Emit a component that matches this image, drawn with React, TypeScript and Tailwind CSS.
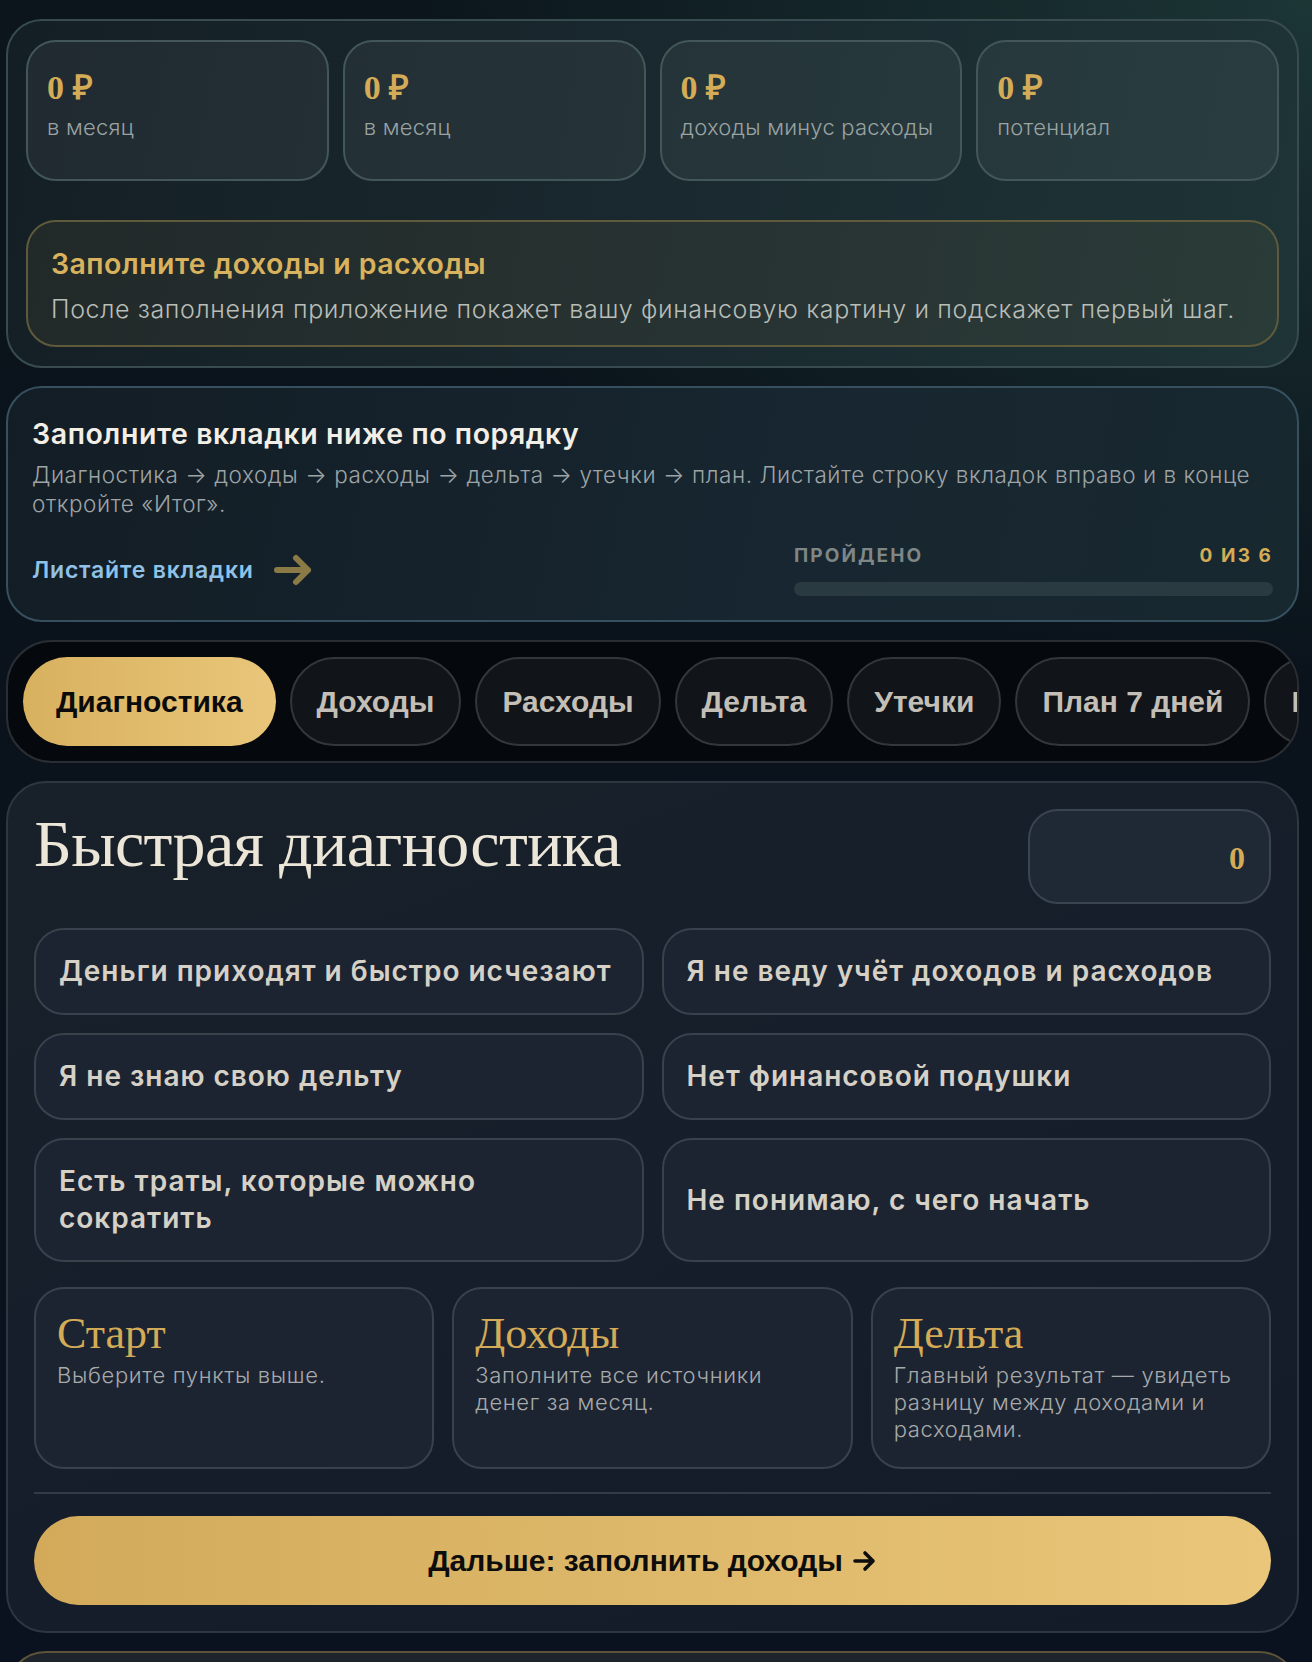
import React from "react";

const sans = "font-['Inter','Noto_Sans',sans-serif]";
const arial = "font-['Liberation_Sans','Arial',sans-serif]";
const serif = "font-['Liberation_Serif','Times_New_Roman',serif]";

const stats = [
  { value: "0 ₽", label: "в месяц" },
  { value: "0 ₽", label: "в месяц" },
  { value: "0 ₽", label: "доходы минус расходы" },
  { value: "0 ₽", label: "потенциал" },
];

const tabs = ["Диагностика", "Доходы", "Расходы", "Дельта", "Утечки", "План 7 дней", "Итог"];

const problems = [
  "Деньги приходят и быстро исчезают",
  "Я не веду учёт доходов и расходов",
  "Я не знаю свою дельту",
  "Нет финансовой подушки",
  "Есть траты, которые можно сократить",
  "Не понимаю, с чего начать",
];

const steps = [
  { title: "Старт", text: "Выберите пункты выше." },
  { title: "Доходы", text: "Заполните все источники денег за месяц." },
  { title: "Дельта", text: "Главный результат — увидеть разницу между доходами и расходами." },
];

const ArrowRight = () => (
  <svg width="42" height="34" viewBox="0 0 42 34" fill="none">
    <path
      d="M4 17h31M23 5l12 12-12 12"
      stroke="#8a7a46"
      strokeWidth="6"
      strokeLinecap="round"
      strokeLinejoin="round"
    />
  </svg>
);

const SmallArrow = () => (
  <svg width="24" height="22" viewBox="0 0 24 22" fill="none" className="inline-block">
    <path
      d="M2 11h18M12 3l8 8-8 8"
      stroke="#0d0d0d"
      strokeWidth="3.6"
      strokeLinecap="round"
      strokeLinejoin="round"
    />
  </svg>
);

export default function App() {
  return (
    <div
      className={`min-h-screen ${sans} bg-[radial-gradient(ellipse_70%_35%_at_100%_0%,#1c3535_0%,transparent_100%),linear-gradient(180deg,#0b151b_0%,#0a121c_50%,#0a1222_100%)]`}
    >
      <div className="flex flex-col gap-[18px] pt-[19px] pl-[6px] pr-[13px] pb-[40px]">
        {/* summary */}
        <section className="rounded-[36px] border-2 border-[#384b4f] bg-[linear-gradient(100deg,#141f25_0%,#1a2a30_55%,#1e3436_100%)] px-[18px] pt-[19px] pb-[19px]">
          <div className="grid grid-cols-4 gap-[14px]">
            {stats.map((s, i) => (
              <div
                key={i}
                className="h-[141px] rounded-[30px] border-2 border-[#435759] bg-white/[0.05] px-[19px] pt-[27px]"
              >
                <div className={`${serif} text-[34px] leading-[38px] font-bold text-[#d4ab57]`}>
                  {s.value}
                </div>
                <div className="mt-[5px] text-[22px] leading-[30px] font-light tracking-[0.01em] text-[#9aa3a2] whitespace-nowrap">
                  {s.label}
                </div>
              </div>
            ))}
          </div>
          <div className="mt-[39px] rounded-[30px] border-2 border-[#5f5a3c] bg-[#d4ad5c]/[0.07] px-[23px] pt-[24px] pb-[19px]">
            <div className="text-[28.5px] leading-[36px] font-semibold tracking-[0.015em] text-[#d8b25c]">
              Заполните доходы и расходы
            </div>
            <div className="mt-[10px] text-[25px] leading-[34px] font-light tracking-[0.025em] text-[#b9bdb8] whitespace-nowrap">
              После заполнения приложение покажет вашу финансовую картину и подскажет первый шаг.
            </div>
          </div>
        </section>

        {/* guide */}
        <section className="rounded-[36px] border-2 border-[#36505f] bg-[linear-gradient(100deg,#131d25_0%,#172630_60%,#18282f_100%)] px-[24px] pt-[28px] pb-[24px]">
          <h2 className="text-[28.5px] leading-[36px] font-semibold tracking-[0.02em] text-[#f3efe6]">
            Заполните вкладки ниже по порядку
          </h2>
          <p className="mt-[8px] text-[22.5px] leading-[29px] font-light tracking-[0.025em] text-[#9ea4a6]">
            Диагностика → доходы → расходы → дельта → утечки → план. Листайте строку вкладок вправо и в конце откройте «Итог».
          </p>
          <div className="mt-[26px] flex items-center justify-between">
            <div className="flex items-center gap-[19px]">
              <span className="text-[23px] font-semibold tracking-[0.035em] text-[#8fc2e6]">Листайте вкладки</span>
              <ArrowRight />
            </div>
            <div className="w-[479px]">
              <div className="flex items-center justify-between h-[24px] text-[19px] font-bold tracking-[0.11em]">
                <span className="text-[#7f8786]">ПРОЙДЕНО</span>
                <span className="text-[#d4ab57]">0 ИЗ 6</span>
              </div>
              <div className="mt-[14px] h-[14px] rounded-full bg-[#2a3a41]" />
            </div>
          </div>
        </section>

        {/* tabs */}
        <nav className="overflow-hidden rounded-[46px] border-2 border-[#2a2e33] bg-[#05080c] pl-[15px] py-[15px]">
          <div className="flex gap-[14px]">
            {tabs.map((t, i) => (
              <div
                key={t}
                className={`${arial} shrink-0 h-[89px] flex items-center rounded-full text-[30px] font-bold ${
                  i === 0
                    ? "px-[33px] bg-[linear-gradient(90deg,#d8b15f,#e9c67a)] text-[#0b0b0b]"
                    : "px-[25px] border-2 border-[#33373c] bg-[#111519] text-[#c3bfb7]"
                }`}
              >
                {t}
              </div>
            ))}
          </div>
        </nav>

        {/* diagnostics */}
        <section className="rounded-[40px] border-2 border-[#2e3641] bg-[linear-gradient(160deg,#182029_0%,#161e2b_50%,#131b29_100%)] px-[26px] pt-[26px] pb-[26px]">
          <div className="flex items-start justify-between">
            <h1 className={`${serif} text-[66px] leading-[70px] text-[#ece6d8] tracking-[-0.01em]`}>
              Быстрая диагностика
            </h1>
            <div className="w-[243px] h-[95px] rounded-[30px] border-2 border-[#3a4450] bg-[#1f2935] flex items-center justify-end pr-[24px]">
              <span className={`${serif} text-[32px] font-bold text-[#d4ab57] mt-[3px]`}>0</span>
            </div>
          </div>

          <div className="mt-[24px] grid grid-cols-2 gap-[18px]">
            {problems.map((p) => (
              <div
                key={p}
                className="flex items-center rounded-[30px] border-2 border-[#39414c] bg-[#1d2431] px-[23px] py-[23px] text-[28px] leading-[37px] font-semibold tracking-[0.035em] text-[#d5d1c7]"
              >
                {p}
              </div>
            ))}
          </div>

          <div className="mt-[25px] grid grid-cols-3 gap-[18px]">
            {steps.map((s) => (
              <div
                key={s.title}
                className="rounded-[30px] border-2 border-[#39414c] bg-[#1d2431] px-[21px] pt-[21px] pb-[24px]"
              >
                <div className={`${serif} text-[44px] leading-[48px] text-[#d4ab57]`}>{s.title}</div>
                <div className="mt-[4px] text-[22px] leading-[27px] font-light tracking-[0.03em] text-[#a7aaab]">
                  {s.text}
                </div>
              </div>
            ))}
          </div>

          <div className="mt-[23px] h-[2px] bg-[#323b47]" />

          <button
            className={`${arial} mt-[22px] w-full h-[89px] rounded-full bg-[linear-gradient(90deg,#d2aa5a,#e9c67a)] text-[30px] font-bold text-[#0d0d0d] flex items-center justify-center gap-[10px]`}
          >
            <span>Дальше: заполнить доходы</span>
            <SmallArrow />
          </button>
        </section>

        {/* next card (cut off) */}
        <section className="h-[220px] rounded-[40px] border-2 border-[#5c5338] bg-[linear-gradient(180deg,#1e242c,#161d27)]" />
      </div>
    </div>
  );
}
